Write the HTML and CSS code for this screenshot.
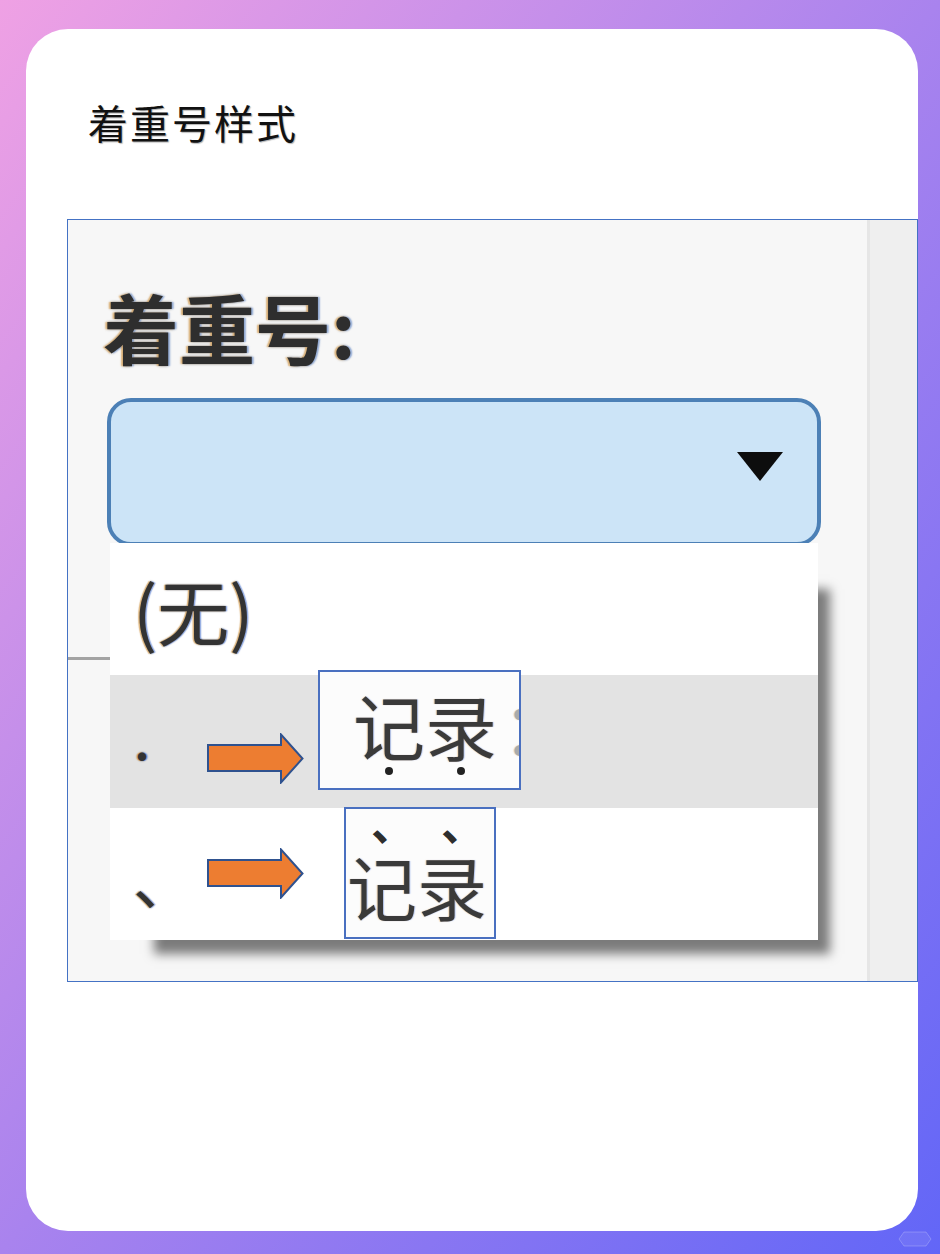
FILE: index.html
```html
<!DOCTYPE html>
<html lang="zh-CN">
<head>
<meta charset="utf-8">
<title>着重号样式</title>
<link rel="stylesheet" href="styles.css">
</head>
<body>
<div class="page">
  <div class="card">
    <h1 class="title">着重号样式</h1>
    <div class="shot">
      <div class="main">
        <div class="label">着重号:</div>
        <div class="select"><span class="caret"></span></div>
        <div class="tabline"></div>
      </div>
      <div class="strip"></div>

      <ul class="menu">
        <li class="opt">(无)</li>
        <li class="opt hover"><span class="mark dotmark">·</span></li>
        <li class="opt"><span class="mark commamark">、</span></li>
      </ul>

      <svg class="arrow arrow1" viewBox="0 0 97 51" width="97" height="51">
        <polygon points="1,12 74,12 74,1.5 95.5,25.5 74,49.5 74,38 1,38" fill="#ed7d31" stroke="#2f528f" stroke-width="2" stroke-linejoin="miter"/>
      </svg>
      <div class="note note1">
        <span class="em"><span class="ch">记</span><span class="dot"></span></span><span class="em"><span class="ch">录</span><span class="dot"></span></span><span class="ch rest">：</span>
      </div>

      <svg class="arrow arrow2" viewBox="0 0 97 51" width="97" height="51">
        <polygon points="1,12 74,12 74,1.5 95.5,25.5 74,49.5 74,38 1,38" fill="#ed7d31" stroke="#2f528f" stroke-width="2" stroke-linejoin="miter"/>
      </svg>
      <div class="note note2">
        <span class="em2"><span class="tick">、</span><span class="ch2">记</span></span><span class="em2"><span class="tick">、</span><span class="ch2">录</span></span>
      </div>
    </div>
  </div>
  <svg class="badge" viewBox="0 0 34 16" width="34" height="16">
    <path d="M6 1 H28 L33 8 L28 15 H6 L1 8 Z" fill="rgba(255,255,255,0.08)" stroke="rgba(255,255,255,0.22)" stroke-width="1"/>
  </svg>
</div>
</body>
</html>
```
FILE: styles.css
```css
* { box-sizing: border-box; }
html, body { margin: 0; padding: 0; }
body { width: 940px; height: 1254px; overflow: hidden; }

.page {
  position: relative;
  width: 940px;
  height: 1254px;
  padding: 29px 22px 23px 26px;
  background: linear-gradient(to bottom right, #efa1e4 0%, #a983ee 50%, #6266f7 100%);
  font-family: "Noto Sans CJK SC", "Noto Sans", sans-serif;
}

.card {
  height: 1202px;
  background: #ffffff;
  border-radius: 42px;
  padding: 69px 0 0 0;
}

.title {
  margin: 0 0 0 62px;
  font-size: 40px;
  line-height: 48px;
  font-weight: 400;
  letter-spacing: 2px;
  color: #111;
  text-shadow: 1px 1px 1px rgba(0,0,0,0.3);
}

.shot {
  position: relative;
  margin: 73px 0 0 41px;
  width: 851px;
  height: 763px;
  border: 1px solid #4472c4;
  background: #f7f7f7;
  display: grid;
  grid-template-columns: 1fr 50px;
}

.main { padding-top: 69px; }

.label {
  margin-left: 35px;
  font-size: 76px;
  line-height: 74px;
  font-weight: 700;
  color: #2e2e2e;
  letter-spacing: 0;
  text-shadow: -2px 0 1.5px rgba(214,140,40,0.55), 2px 0 1.5px rgba(60,110,200,0.45), 0 0 3px rgba(0,0,0,0.35);
}

.select {
  margin: 35px 0 0 39px;
  width: 714px;
  height: 148px;
  border: 4px solid #4c80b6;
  border-radius: 24px;
  background: #cce4f7;
  display: flex;
  justify-content: flex-end;
  align-items: flex-start;
  padding: 50px 34px 0 0;
}

.caret {
  width: 0;
  height: 0;
  border-left: 23px solid transparent;
  border-right: 23px solid transparent;
  border-top: 29px solid #0d0d0d;
  filter: blur(0.7px);
}

.tabline {
  margin-top: 111px;
  width: 42px;
  height: 3px;
  background: #a3a3a3;
}

.strip {
  background: #efefef;
  border-left: 3px solid #e6e6e6;
}

.menu {
  position: absolute;
  left: 42px;
  top: 323px;
  width: 708px;
  margin: 0;
  padding: 0;
  list-style: none;
  background: #fff;
  box-shadow: 28px 30px 10px -16px rgba(0,0,0,0.5);
}

.opt {
  height: 132px;
  padding-left: 23px;
  font-size: 72px;
  line-height: 132px;
  color: #333;
  text-shadow: -1.5px 0 1px rgba(214,140,40,0.55), 1.5px 0 1px rgba(60,110,220,0.5), 0 0 2px rgba(0,0,0,0.45);
}
.opt.hover { background: #e3e3e3; height: 133px; }
.mark { color: #333; }
.dotmark {
  font-size: 40px;
  margin-left: -11px;
}
.commamark {
  font-size: 62px;
}

.arrow { position: absolute; }
.arrow1 { left: 139px; top: 513px; }
.arrow2 { left: 139px; top: 628px; }

.note {
  position: absolute;
  border: 2px solid #4a70c0;
  background: #fcfcfc;
  overflow: hidden;
  white-space: nowrap;
  color: #3a3a3a;
  display: flex;
  align-items: flex-start;
}

.note1 {
  left: 250px;
  top: 450px;
  width: 203px;
  height: 120px;
  padding: 16px 0 0 33px;
}

.em {
  display: inline-flex;
  flex-direction: column;
  align-items: center;
}

.ch, .ch2 {
  font-size: 72px;
  line-height: 72px;
  text-shadow: -1px 0 1px rgba(214,140,40,0.35), 1px 0 1px rgba(60,110,220,0.35);
}

.dot {
  width: 8px;
  height: 8px;
  margin-top: 7px;
  border-radius: 50%;
  background: #222;
}

.rest { flex: none; color: #aaa; margin-left: 5px; }

.note2 {
  left: 276px;
  top: 587px;
  width: 152px;
  height: 132px;
  padding: 0 0 0 1px;
}

.em2 {
  display: inline-flex;
  flex-direction: column;
  align-items: center;
}

.tick {
  font-size: 44px;
  line-height: 26px;
  height: 26px;
  padding-left: 22px;
  color: #2e2e2e;
  font-weight: 700;
}

.ch2 {
  font-size: 70px;
  line-height: 70px;
  margin-top: 16px;
}

.badge {
  position: absolute;
  right: 8px;
  bottom: 7px;
}
```
